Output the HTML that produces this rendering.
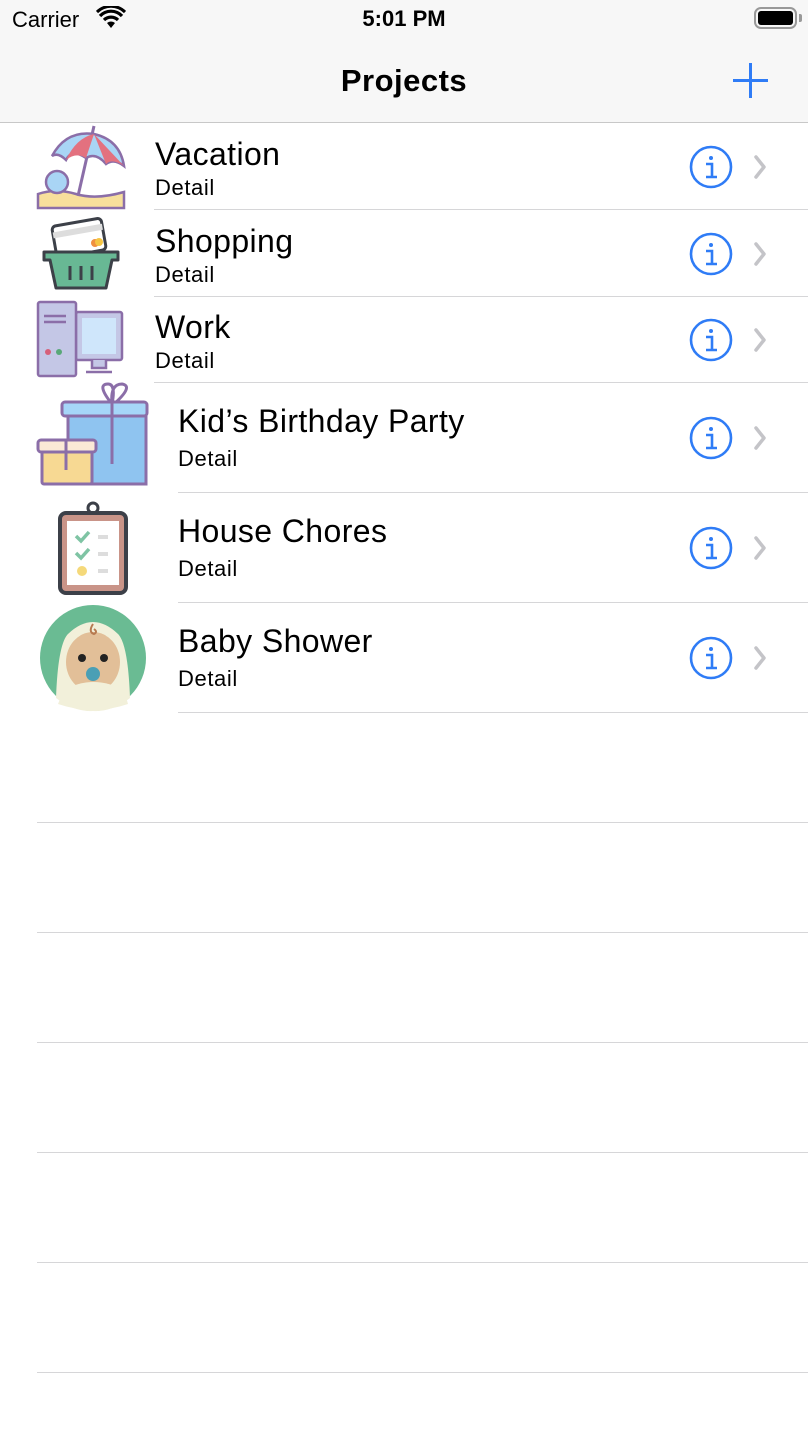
<!DOCTYPE html>
<html><head><meta charset="utf-8"><style>
*{margin:0;padding:0;box-sizing:border-box}
body{width:808px;height:1442px;background:#fff;font-family:"Liberation Sans",sans-serif;position:relative;overflow:hidden;color:#000}
.a{position:absolute}
.sep{position:absolute;right:0;height:1px;background:#d6d6d8}
.t{position:absolute;font-size:32px;line-height:1;letter-spacing:0.4px}
.d{position:absolute;font-size:22px;line-height:1;letter-spacing:0.6px}
</style></head><body>
<div class="a" style="left:0;top:0;width:808px;height:123px;background:#f7f7f7;border-bottom:1px solid #c8c8c8"></div>
<div class="a" style="left:12px;top:7px;font-size:22px">Carrier</div>
<svg class="a" style="left:96px;top:6px" width="30" height="24" viewBox="0 0 30 24"><path d="M15 22 L11 17 A6 6 0 0 1 19 17 Z" fill="#000"/><path d="M8 14 A10 10 0 0 1 22 14" stroke="#000" stroke-width="3.2" fill="none"/><path d="M4 10 A15 15 0 0 1 26 10" stroke="#000" stroke-width="3.2" fill="none"/><path d="M1 6 A20 20 0 0 1 29 6" stroke="#000" stroke-width="3" fill="none"/></svg>
<div class="a" style="left:0;width:808px;top:6px;text-align:center;font-size:22px;font-weight:bold">5:01 PM</div>
<div class="a" style="left:754px;top:7px;width:43px;height:22px;border:2px solid #999;border-radius:7px"></div>
<div class="a" style="left:758px;top:11px;width:35px;height:14px;background:#000;border-radius:3px"></div>
<div class="a" style="left:799px;top:14px;width:3px;height:8px;background:#999;border-radius:0 2px 2px 0"></div>
<div class="a" style="left:0;width:808px;top:63px;text-align:center;font-size:31px;font-weight:bold;letter-spacing:0.5px">Projects</div>
<div class="a" style="left:733px;top:79px;width:35px;height:3px;background:#2f7cf6"></div>
<div class="a" style="left:749px;top:63px;width:3px;height:35px;background:#2f7cf6"></div>

<div class="sep" style="left:154px;top:209px"></div>
<div class="sep" style="left:154px;top:296px"></div>
<div class="sep" style="left:154px;top:382px"></div>
<div class="sep" style="left:178px;top:492px"></div>
<div class="sep" style="left:178px;top:602px"></div>
<div class="sep" style="left:178px;top:712px"></div>
<div class="sep" style="left:37px;top:822px"></div>
<div class="sep" style="left:37px;top:932px"></div>
<div class="sep" style="left:37px;top:1042px"></div>
<div class="sep" style="left:37px;top:1152px"></div>
<div class="sep" style="left:37px;top:1262px"></div>
<div class="sep" style="left:37px;top:1372px"></div>

<div class="t" style="left:155px;top:138px">Vacation</div><div class="d" style="left:155px;top:177px">Detail</div>
<div class="t" style="left:155px;top:225px">Shopping</div><div class="d" style="left:155px;top:264px">Detail</div>
<div class="t" style="left:155px;top:311px">Work</div><div class="d" style="left:155px;top:350px">Detail</div>
<div class="t" style="left:178px;top:405px">Kid’s Birthday Party</div><div class="d" style="left:178px;top:448px">Detail</div>
<div class="t" style="left:178px;top:515px">House Chores</div><div class="d" style="left:178px;top:558px">Detail</div>
<div class="t" style="left:178px;top:625px">Baby Shower</div><div class="d" style="left:178px;top:668px">Detail</div>

<svg class="a" style="left:680px;top:124px" width="100" height="590">
<defs><g id="acc"><circle cx="31" cy="0" r="20" fill="none" stroke="#2f7cf6" stroke-width="2.6"/><circle cx="31" cy="-9" r="2" fill="#2f7cf6"/><path d="M26 -3 H32 V10 M26 10 H37" stroke="#2f7cf6" stroke-width="2.6" fill="none"/><path d="M76 -10 L84 0 L76 10" stroke="#c4c4c8" stroke-width="3.5" fill="none" stroke-linecap="round" stroke-linejoin="round"/></g></defs>
<use href="#acc" y="43"/><use href="#acc" y="130"/><use href="#acc" y="216"/><use href="#acc" y="314"/><use href="#acc" y="424"/><use href="#acc" y="534"/>
</svg>

<svg class="a" style="left:36px;top:124px" width="92" height="88" viewBox="0 0 92 88">
<path d="M2 70 Q20 64 40 70 Q60 76 88 68 V84 H2Z" fill="#f7df9c" stroke="#8b6ea8" stroke-width="2.5"/>
<circle cx="21" cy="58" r="11" fill="#a9d5f5" stroke="#8b6ea8" stroke-width="2.5"/>
<path d="M58 2 L42 72" stroke="#8b6ea8" stroke-width="3"/>
<path d="M16 32 Q30 6 58 10 Q84 16 88 42 Q78 34 70 40 Q60 28 50 34 Q36 24 30 36 Q22 28 16 32Z" fill="#a9d5f5" stroke="#8b6ea8" stroke-width="2.5"/>
<path d="M30 36 Q40 14 58 10 L50 34 Q40 28 30 36Z M58 10 L70 40 Q76 34 88 42 Z" fill="#e3717f"/>
</svg>
<svg class="a" style="left:40px;top:214px" width="82" height="78" viewBox="0 0 82 78">
<rect x="14" y="8" width="50" height="32" rx="4" transform="rotate(-10 39 24)" fill="#fff" stroke="#3c4048" stroke-width="3"/>
<rect x="14" y="14" width="50" height="6" transform="rotate(-10 39 24)" fill="#ddd"/>
<circle cx="55" cy="29" r="4" fill="#f09040"/><circle cx="59" cy="28" r="4" fill="#f5c543"/>
<path d="M4 38 H78 V46 H72 L66 74 H16 L10 46 H4Z" fill="#68b894" stroke="#3c4048" stroke-width="3" stroke-linejoin="round"/>
<path d="M30 52 V66 M41 52 V66 M52 52 V66" stroke="#3c4048" stroke-width="3"/>
</svg>
<svg class="a" style="left:36px;top:300px" width="90" height="80" viewBox="0 0 90 80">
<rect x="40" y="12" width="46" height="48" rx="2" fill="#c4c7e6" stroke="#8b6ea8" stroke-width="2.5"/>
<rect x="46" y="18" width="34" height="36" fill="#cfe6fb"/>
<path d="M56 60 V68 H70 V60 M50 72 H76" stroke="#8b6ea8" stroke-width="2.5" fill="#c4c7e6"/>
<rect x="2" y="2" width="38" height="74" rx="2" fill="#c4c7e6" stroke="#8b6ea8" stroke-width="2.5"/>
<path d="M8 16 H30 M8 22 H30" stroke="#8b6ea8" stroke-width="2.5"/>
<circle cx="12" cy="52" r="3" fill="#d6607a"/><circle cx="23" cy="52" r="3" fill="#58a878"/>
</svg>
<svg class="a" style="left:36px;top:382px" width="114" height="106" viewBox="0 0 114 106">
<path d="M76 22 Q60 2 72 2 Q80 2 76 22 Q74 2 86 2 Q98 4 78 22" fill="none" stroke="#8b6ea8" stroke-width="3"/>
<rect x="32" y="30" width="78" height="72" fill="#8fc4f0" stroke="#8b6ea8" stroke-width="3"/>
<rect x="26" y="20" width="85" height="14" rx="3" fill="#a6d6f8" stroke="#8b6ea8" stroke-width="3"/>
<path d="M76 20 V82" stroke="#8b6ea8" stroke-width="3"/>
<rect x="6" y="66" width="50" height="36" rx="2" fill="#f7d993" stroke="#8b6ea8" stroke-width="3"/>
<rect x="2" y="58" width="58" height="12" rx="3" fill="#fbe9d6" stroke="#8b6ea8" stroke-width="3"/>
<path d="M30 58 V88" stroke="#8b6ea8" stroke-width="3"/>
</svg>
<svg class="a" style="left:56px;top:500px" width="72" height="96" viewBox="0 0 72 96">
<circle cx="37" cy="8" r="5" fill="none" stroke="#3c4048" stroke-width="3"/>
<rect x="4" y="13" width="66" height="80" rx="6" fill="#c99488" stroke="#3c4048" stroke-width="4"/>
<rect x="11" y="21" width="52" height="64" fill="#fff"/>
<path d="M20 36 L25 41 L33 32 M20 53 L25 58 L33 49" stroke="#7fc4a4" stroke-width="3.5" fill="none"/>
<circle cx="26" cy="71" r="5" fill="#f5d97a"/>
<path d="M42 37 H52 M42 54 H52 M42 71 H52" stroke="#ddd" stroke-width="4"/>
</svg>
<svg class="a" style="left:38px;top:604px" width="110" height="108" viewBox="0 0 110 108">
<circle cx="55" cy="54" r="53" fill="#6abb93"/>
<path d="M18 94 Q20 40 30 30 Q55 6 80 30 Q90 40 92 94 Q74 108 55 107 Q36 108 18 94Z" fill="#f2f0da"/>
<ellipse cx="55" cy="58" rx="27" ry="30" fill="#e2bf98"/>
<path d="M55 20 Q50 28 56 30 Q60 28 56 25" stroke="#b77a50" stroke-width="2" fill="none"/>
<circle cx="44" cy="54" r="4" fill="#222"/><circle cx="66" cy="54" r="4" fill="#222"/>
<circle cx="55" cy="70" r="7" fill="#4a9fb5"/>
<path d="M26 86 Q55 70 86 86 L90 100 Q55 112 20 100Z" fill="#f2f0da"/>
</svg>
</body></html>
